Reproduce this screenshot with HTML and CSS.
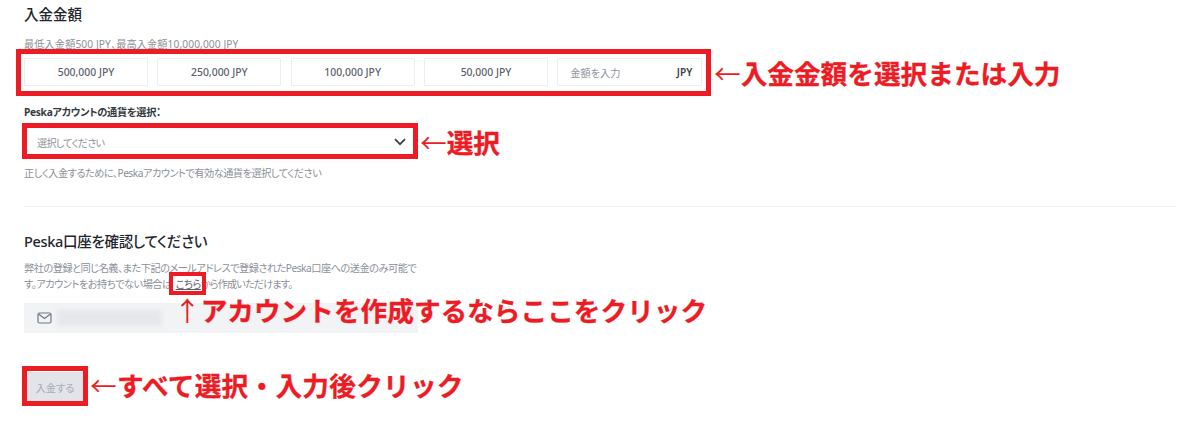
FILE: index.html
```html
<!DOCTYPE html>
<html lang="ja">
<head>
<meta charset="utf-8">
<title>入金金額</title>
<link rel="stylesheet" href="styles.css">
</head>
<body>
<main class="page">
  <section class="amount">
    <h2 class="title">入金金額</h2>
    <p class="hint hint-limit">最低入金額500 JPY、最高入金額10,000,000 JPY</p>
    <div class="amounts">
      <button class="amount-btn">500,000 JPY</button>
      <button class="amount-btn">250,000 JPY</button>
      <button class="amount-btn">100,000 JPY</button>
      <button class="amount-btn">50,000 JPY</button>
      <div class="amount-input"><span class="placeholder">金額を入力</span><b class="unit">JPY</b></div>
    </div>
    <div class="narrow">
      <p class="label">Peskaアカウントの通貨を選択：</p>
      <div class="select">
        <span class="placeholder placeholder-tight">選択してください</span>
        <svg class="chevron" width="12" height="8" viewBox="0 0 12 8"><path d="M1 1.2l5 5 5-5" fill="none" stroke="#3a3f47" stroke-width="1.7"/></svg>
      </div>
      <p class="hint hint-help">正しく入金するために、Peskaアカウントで有効な通貨を選択してください</p>
    </div>
  </section>
  <hr class="divider">
  <section class="narrow">
    <h2 class="title title-account">Peska口座を確認してください</h2>
    <p class="hint hint-account">弊社の登録と同じ名義、また下記のメールアドレスで登録されたPeska口座への送金のみ可能です。アカウントをお持ちでない場合は<a class="link">こちら</a><span class="tail">から作成いただけます。</span></p>
    <div class="email">
      <svg class="mail" width="15" height="12" viewBox="0 0 15 12"><rect x="1" y="1" width="13" height="10" rx="1.5" fill="none" stroke="#6e7786" stroke-width="1.2"/><path d="M1.5 2l6 4.5 6-4.5" fill="none" stroke="#6e7786" stroke-width="1.2"/></svg>
      <span class="blur"></span>
    </div>
  </section>
  <button class="submit">入金する</button>
</main>

<div class="mark mark-amounts"></div>
<div class="mark mark-select"></div>
<div class="mark mark-link"></div>
<div class="mark mark-submit"></div>

<p class="note note-amounts"><span class="arrow">←</span>入金金額を選択または入力</p>
<p class="note note-select"><span class="arrow">←</span>選択</p>
<p class="note note-link"><span class="arrow">↑</span>アカウントを作成するならここをクリック</p>
<p class="note note-submit"><span class="arrow">←</span>すべて選択・入力後クリック</p>
</body>
</html>
```

FILE: styles.css
```css
* { box-sizing: border-box; }
html, body { margin: 0; height: 430px; overflow: hidden; background: #fff; }
body {
  position: relative;
  font-family: "Noto Sans", "Noto Sans CJK JP", sans-serif;
  color: #2b3038;
}
.page { padding: 0 24px; font-feature-settings: "palt"; }
.title { margin: 0; font-size: 14.5px; line-height: 20px; font-weight: 500; color: #22262c; }
.amount { padding-top: 4px; }
.hint { margin: 0; font-size: 10.2px; line-height: 16px; color: #8b9098; }
.hint-limit { margin-top: 12px; letter-spacing: 0.1px; }
.amounts { display: flex; gap: 9.33px; margin-top: 6px; width: 678px; }
.amount-btn {
  flex: 0 0 124px; height: 28px; padding: 0;
  background: #fff; border: 1px solid #eceef0; border-radius: 1px;
  font: 500 10.4px "Noto Sans", "Noto Sans CJK JP", sans-serif; color: #5a616b;
}
.amount-input {
  flex: 0 0 145px; height: 28px; padding: 0 9px 0 12px;
  display: flex; align-items: center; justify-content: space-between;
  border: 1px solid #eceef0; border-radius: 1px; font-size: 10.2px;
}
.placeholder { color: #8f949c; }
.placeholder-tight { letter-spacing: -0.8px; }
.unit { font-weight: 600; color: #3a3f47; }
.narrow { width: 394px; }
.label { margin: 18px 0 0; font-size: 10.2px; line-height: 16px; font-weight: 700; color: #343941; letter-spacing: -0.3px; }
.select {
  height: 26px; margin-top: 9px; padding: 0 12px 0 13px;
  display: flex; align-items: center; justify-content: space-between;
  font-size: 10.2px;
}
.hint-help { margin-top: 10px; letter-spacing: -0.5px; }
.divider { margin: 25px 0 0; border: 0; border-top: 1px solid #eceef0; }
.title-account { margin-top: 24px; letter-spacing: -0.3px; }
.hint-account { margin-top: 9px; letter-spacing: -0.5px; }
.link { margin-left: 4px; color: #5a616b; text-decoration: underline; }
.tail { letter-spacing: -0.9px; }
.email {
  height: 30px; margin-top: 11px; padding-left: 13px;
  display: flex; align-items: center; gap: 5px;
  background: #f2f3f5;
}
.mail { margin-top: -1px; }
.blur { width: 105px; height: 16px; margin-top: -1px; background: #e6e7ea; filter: blur(2px); }
.submit {
  display: block; width: 56px; height: 30px; margin: 39px 0 0 3px; padding: 0;
  background: #e2e4e9; border: 0; border-radius: 1px;
  font: 10.2px "Noto Sans", "Noto Sans CJK JP", sans-serif; font-feature-settings: "palt"; color: #a6abb3;
}

.mark { position: absolute; border: 5px solid #ed1c24; }
.mark-amounts { left: 16px; top: 49px; width: 695px; height: 47px; }
.mark-select { left: 22px; top: 123px; width: 396px; height: 36px; }
.mark-link { left: 169px; top: 272px; width: 37px; height: 23px; border-width: 4px; }
.mark-submit { left: 22px; top: 366px; width: 66px; height: 40px; }

.note {
  position: absolute; margin: 0; white-space: nowrap;
  font-size: 26.67px; line-height: 36px; font-weight: 700; color: #ed1c24;
  font-family: "Noto Sans CJK JP", sans-serif;
  -webkit-text-stroke: 0.3px #ed1c24;
}
.arrow { font-weight: 400; -webkit-text-stroke: 0; }
.note-amounts { left: 714px; top: 55px; }
.note-select { left: 420px; top: 124px; }
.note-link { left: 174px; top: 292px; }
.note-submit { left: 90px; top: 367px; letter-spacing: 0.25px; }
```
